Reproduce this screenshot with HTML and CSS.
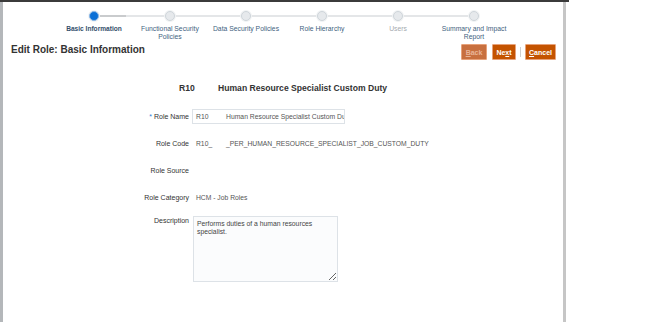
FILE: index.html
```html
<!DOCTYPE html>
<html>
<head>
<meta charset="utf-8">
<link rel="stylesheet" href="styles.css">
</head>
<body>
<div class="frame">
  <div class="leftbar"></div>
  <div class="dialog">
    <div class="train">
      <div class="step current"><span class="dot"></span><span class="lbl">Basic Information</span></div>
      <div class="step"><span class="dot"></span><span class="lbl">Functional Security Policies</span></div>
      <div class="step"><span class="dot"></span><span class="lbl">Data Security Policies</span></div>
      <div class="step"><span class="dot"></span><span class="lbl">Role Hierarchy</span></div>
      <div class="step disabled"><span class="dot"></span><span class="lbl">Users</span></div>
      <div class="step last"><span class="dot"></span><span class="lbl">Summary and Impact Report</span></div>
    </div>
    <div class="titlebar">
      <h1 class="title">Edit Role: Basic Information</h1>
      <div class="buttons">
        <button class="btn btn-back"><u>B</u>ack</button>
        <button class="btn btn-next">Ne<u>x</u>t</button>
        <span class="sep"></span>
        <button class="btn btn-cancel"><u>C</u>ancel</button>
      </div>
    </div>
    <div class="rolehead"><span class="code">R10</span><span class="name">Human Resource Specialist Custom Duty</span></div>
    <div class="form">
      <div class="label"><span class="req">*</span> Role Name</div>
      <div class="input"><span class="p1">R10</span><span>Human Resource Specialist Custom Duty</span></div>
      <div class="label">Role Code</div>
      <div class="value"><span class="p1">R10_</span><span>_PER_HUMAN_RESOURCE_SPECIALIST_JOB_CUSTOM_DUTY</span></div>
      <div class="label">Role Source</div>
      <div class="value"></div>
      <div class="label">Role Category</div>
      <div class="value">HCM - Job Roles</div>
      <div class="label top">Description</div>
      <textarea class="desc" readonly>Performs duties of a human resources specialist.</textarea>
    </div>
  </div>
</div>
</body>
</html>
```
FILE: styles.css
```css
html, body { margin: 0; padding: 0; background: #ffffff; }
body { font-family: "Liberation Sans", Arial, sans-serif; }
.frame {
  width: 569px; height: 322px; display: flex; box-sizing: border-box;
  border-top: 2px solid #3b3b3b;
}
.leftbar { width: 3px; background: #b4b7ba; }
.dialog {
  width: 563px; box-sizing: border-box; background: #fff;
  border-right: 3px solid #c6c6c6;
}
.train { display: flex; padding-left: 53px; padding-top: 9px; }
.step {
  position: relative; width: 76px; display: flex; flex-direction: column;
  align-items: center;
}
.step::after {
  content: ""; position: absolute; top: 4px; left: 50%; width: 76px; height: 2px;
  background: #e4e6e8;
}
.step.current::after {
  background: linear-gradient(to right, #c9cbcd 0, #c9cbcd 32px, #e4e6e8 32px);
}
.step.last::after { display: none; }
.dot {
  position: relative; z-index: 1; width: 10px; height: 10px; border-radius: 50%;
  box-sizing: border-box; background: #e6e9ec; border: 1px solid #cfd5da;
  box-shadow: 0 0 0 1px #f1f3f4;
}
.step.current .dot { background: #0a6fd6; border: 1px solid #8ab7e6; }
.lbl {
  margin-top: 4px; font-size: 6.8px; line-height: 7.5px; color: #3f5f80;
  text-align: center; width: 74px;
}
.step.current .lbl { font-weight: bold; color: #344f6b; font-size: 6.6px; }
.step.disabled .lbl { color: #a5aaaf; }
.titlebar {
  display: flex; justify-content: space-between; align-items: center;
  padding: 0 7px 0 8px; height: 20px;
}
.title { margin: 0; font-size: 10px; font-weight: bold; color: #333; position: relative; top: -1px; }
.buttons { display: flex; align-items: center; gap: 5px; position: relative; top: 2px; }
.btn {
  height: 16px; padding: 0 3px; font-family: "Liberation Sans", Arial, sans-serif;
  font-size: 7px; font-weight: bold; color: #fff; background: #c45300;
  border: 1px solid #e7a27a; border-radius: 1px; box-sizing: border-box;
}
.btn-back { width: 26px; background: #c8703f; color: #e8b598; }
.btn-next { width: 24px; }
.btn-cancel { width: 31px; }
.sep { width: 1px; height: 10px; background: #cfcfcf; margin: 0 -1px; }
.rolehead {
  margin-top: 23px; margin-left: 176px; font-size: 8.6px; font-weight: bold; color: #333;
  display: flex; height: 10px; line-height: 10px;
}
.rolehead .code { width: 39px; }
.form {
  margin-top: 16px; display: grid; grid-template-columns: 80px 260px;
  column-gap: 3px; row-gap: 12px; grid-auto-rows: 15px; margin-left: 106px;
  font-size: 7px; color: #333;
}
.label { text-align: right; line-height: 15px; color: #333; }
.label.top { line-height: 8px; }
.req { color: #2a7bd6; }
.input {
  width: 153px; height: 15px; box-sizing: border-box; border: 1px solid #dde2e7;
  padding-left: 3px; line-height: 13px; white-space: nowrap; overflow: hidden; color: #555;
  font-size: 6.8px;
}
.value { padding-left: 4px; line-height: 15px; color: #555; white-space: nowrap; font-size: 6.75px; }
.p1 { display: inline-block; width: 30px; }
.desc {
  width: 145px; height: 66px; box-sizing: border-box; margin: -1px 0 0 1px;
  border: 1px solid #dde2e7; background: #fbfcfd; resize: both;
  font-family: "Liberation Sans", Arial, sans-serif; font-size: 6.8px; line-height: 7.5px;
  color: #444; padding: 3px 3px;
}
```
